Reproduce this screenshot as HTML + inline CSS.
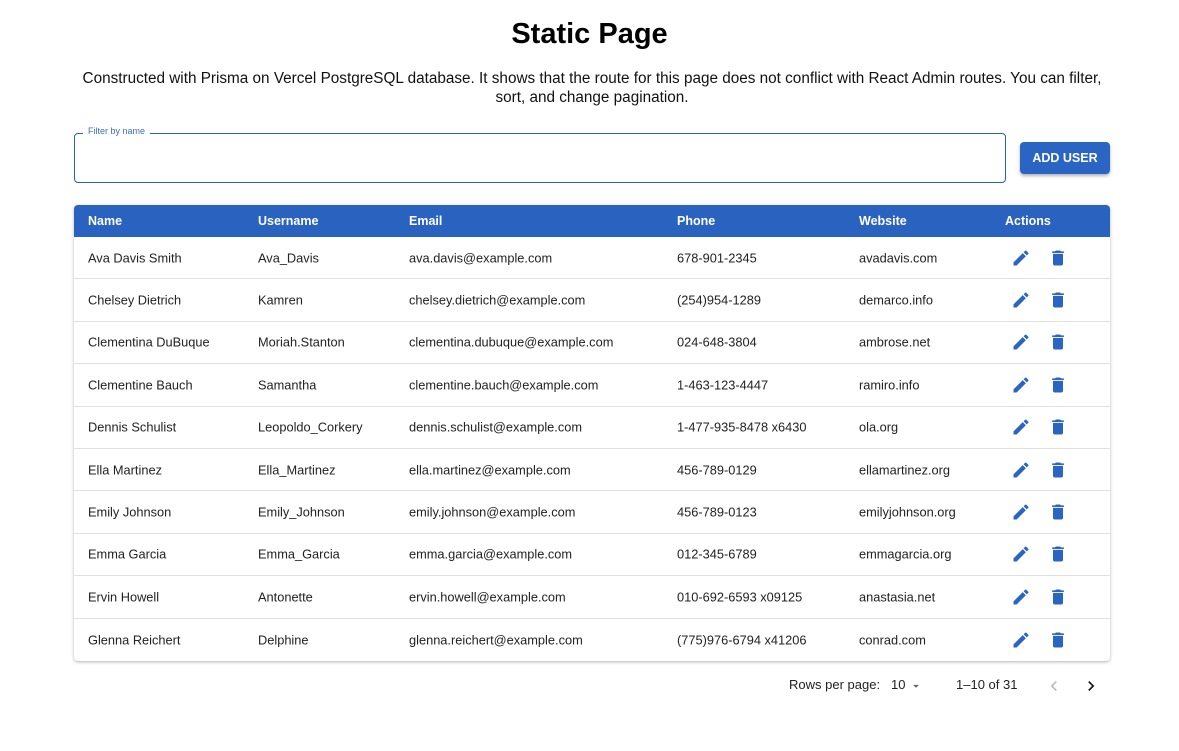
<!DOCTYPE html>
<html><head><meta charset="utf-8"><style>
*{box-sizing:border-box;margin:0;padding:0}
body{width:1179px;height:751px;background:#fff;font-family:"Liberation Sans",Roboto,Arial,sans-serif;color:#000;position:relative;overflow:hidden}
h1{position:absolute;top:18px;left:0;width:1179px;text-align:center;font-size:29px;font-weight:bold}
.sub{position:absolute;top:69px;left:20px;width:1144px;text-align:center;font-size:15.3px;line-height:19px;color:#111}
.inp{position:absolute;left:74px;top:133px;width:932px;height:50px;border:1px solid #2a62b8;border-radius:4px}
.inp span{position:absolute;top:-8px;left:8px;background:#fff;padding:0 5px;font-size:9px;color:#3a6fc0}
.btn{position:absolute;left:1020px;top:142px;width:90px;height:32px;background:#2a65c4;color:#fff;font-size:12.5px;font-weight:bold;border-radius:4px;text-align:center;line-height:32px;box-shadow:0 2px 3px rgba(0,0,0,.3)}
.tbl{position:absolute;left:74px;top:205px;width:1036px;border-radius:4px;box-shadow:0 1px 3px rgba(0,0,0,.3);overflow:hidden}
.hd{height:32px;background:#2962bf;color:#fff;font-size:12.5px;font-weight:bold;position:relative}
.row{height:42.4px;border-bottom:1px solid #e0e0e0;position:relative;font-size:12.8px;color:#222}
.row:last-child{border-bottom:none}
.c{position:absolute;top:50%;transform:translateY(-50%);white-space:nowrap}
.c1{left:14px}.c2{left:184px}.c3{left:335px}.c4{left:603px}.c5{left:785px}.c6{left:931px}
.ic{position:absolute;top:50%;transform:translateY(-50%)}
.pg{position:absolute;top:677px;font-size:13px;color:#222}
</style></head><body>
<h1>Static Page</h1>
<div class="sub">Constructed with Prisma on Vercel PostgreSQL database. It shows that the route for this page does not conflict with React Admin routes. You can filter,<br>sort, and change pagination.</div>
<div class="inp"><span>Filter by name</span></div>
<div class="btn">ADD USER</div>
<div class="tbl">
<div class="hd"><span class="c c1">Name</span><span class="c c2">Username</span><span class="c c3">Email</span><span class="c c4">Phone</span><span class="c c5">Website</span><span class="c c6">Actions</span></div>
<div id="rows"></div>
</div>
<span class="pg" style="left:789px">Rows per page:</span>
<span class="pg" style="left:891px">10</span>
<svg style="position:absolute;left:909px;top:679px" width="14" height="14" viewBox="0 0 24 24"><path d="M7 10l5 5 5-5z" fill="#666"/></svg>
<span class="pg" style="left:956px">1–10 of 31</span>
<svg style="position:absolute;left:1044px;top:676px" width="20" height="20" viewBox="0 0 24 24"><path d="M15.4 7.4 14 6l-6 6 6 6 1.4-1.4L10.8 12z" fill="#bbb"/></svg>
<svg style="position:absolute;left:1081px;top:676px" width="20" height="20" viewBox="0 0 24 24"><path d="M10 6 8.6 7.4 13.2 12l-4.6 4.6L10 18l6-6z" fill="#111"/></svg>
<script>
const d=[["Ava Davis Smith","Ava_Davis","ava.davis@example.com","678-901-2345","avadavis.com"],
["Chelsey Dietrich","Kamren","chelsey.dietrich@example.com","(254)954-1289","demarco.info"],
["Clementina DuBuque","Moriah.Stanton","clementina.dubuque@example.com","024-648-3804","ambrose.net"],
["Clementine Bauch","Samantha","clementine.bauch@example.com","1-463-123-4447","ramiro.info"],
["Dennis Schulist","Leopoldo_Corkery","dennis.schulist@example.com","1-477-935-8478 x6430","ola.org"],
["Ella Martinez","Ella_Martinez","ella.martinez@example.com","456-789-0129","ellamartinez.org"],
["Emily Johnson","Emily_Johnson","emily.johnson@example.com","456-789-0123","emilyjohnson.org"],
["Emma Garcia","Emma_Garcia","emma.garcia@example.com","012-345-6789","emmagarcia.org"],
["Ervin Howell","Antonette","ervin.howell@example.com","010-692-6593 x09125","anastasia.net"],
["Glenna Reichert","Delphine","glenna.reichert@example.com","(775)976-6794 x41206","conrad.com"]];
let h="";
for(const r of d){h+='<div class="row">'+r.map((t,i)=>`<span class="c c${i+1}">${t}</span>`).join("")+
'<svg class="ic" style="left:937px" width="20" height="20" viewBox="0 0 24 24"><path d="M3 17.25V21h3.75L17.81 9.94l-3.75-3.75zM20.71 7.04a1 1 0 0 0 0-1.41l-2.34-2.34a1 1 0 0 0-1.41 0l-1.83 1.83 3.75 3.75z" fill="#2a65c4"/></svg>'+
'<svg class="ic" style="left:974px" width="20" height="20" viewBox="0 0 24 24"><path d="M6 19c0 1.1.9 2 2 2h8c1.1 0 2-.9 2-2V7H6zM19 4h-3.5l-1-1h-5l-1 1H5v2h14z" fill="#2a65c4"/></svg></div>';}
document.getElementById("rows").innerHTML=h;
</script>
</body></html>
